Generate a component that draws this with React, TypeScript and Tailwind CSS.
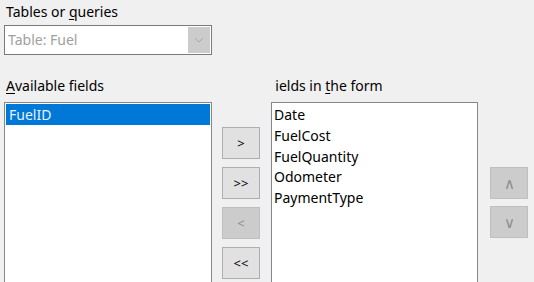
import React from 'react';

const formFields = ['Date', 'FuelCost', 'FuelQuantity', 'Odometer', 'PaymentType'];

function Btn({ label, disabled, big }: { label: string; disabled?: boolean; big?: boolean }) {
  return (
    <button
      className={`w-[38px] h-[32px] flex items-center justify-center leading-none border ${big ? 'text-[15px]' : 'text-[13px]'} ${
        disabled ? 'bg-[#cccccc] border-[#bfbfbf] text-[#8c8c8c]' : 'bg-[#e1e1e1] border-[#adadad] text-[#000000]'
      }`}
    >
      {label}
    </button>
  );
}

export default function App() {
  return (
    <div
      className="w-[534px] h-[282px] overflow-hidden bg-[#f0f0f0] text-[14px] leading-5 text-black"
      style={{ fontFamily: '"Noto Sans", "Open Sans", sans-serif' }}
    >
      <div className="pl-[4px] pt-[2px]">
        <div className="pl-[2px]">
          Tables or <span className="underline underline-offset-2">q</span>ueries
        </div>
        <div className="mt-[3px] w-[208px] h-[30px] bg-white border border-[#7a7a7a] flex items-center justify-between pl-[3px] pr-[1px]">
          <span className="text-[#a0a0a0]">Table: Fuel</span>
          <span className="w-[22px] h-[26px] bg-[#cccccc] flex items-center justify-center">
            <svg width="10" height="6" viewBox="0 0 10 6">
              <path d="M1 1 L5 5 L9 1" fill="none" stroke="#a6a6a6" strokeWidth="1" />
            </svg>
          </span>
        </div>

        <div className="flex mt-[21px]">
          <div className="w-[208px]">
            <div className="pl-[2px] mb-[6px]">
              <span className="underline underline-offset-2">A</span>vailable fields
            </div>
            <div className="h-[200px] bg-white border border-[#828790] p-[1px]">
              <div className="h-[21px] bg-[#0078d7] text-[#eaf2fc] pl-[3px] leading-[21px]">FuelID</div>
            </div>
          </div>

          <div className="ml-[10px] pt-[51px] flex flex-col gap-[8px]">
            <Btn label=">" />
            <Btn label=">>" />
            <Btn label="<" disabled />
            <Btn label="<<" />
          </div>

          <div className="ml-[11px] w-[207px]">
            <div className="ml-[4px] mb-[6px] overflow-hidden whitespace-nowrap">
              <span className="inline-block -ml-[7px]">
                Fields in <span className="underline underline-offset-2">t</span>he form
              </span>
            </div>
            <div className="h-[200px] bg-white border border-[#828790] pt-[2px] pl-[2px]">
              {formFields.map((f) => (
                <div key={f} className="h-[20.75px] leading-[20px]">
                  {f}
                </div>
              ))}
            </div>
          </div>

          <div className="ml-[12px] pt-[91px] flex flex-col gap-[7px]">
            <Btn label="∧" disabled big />
            <Btn label="∨" disabled big />
          </div>
        </div>
      </div>
    </div>
  );
}
